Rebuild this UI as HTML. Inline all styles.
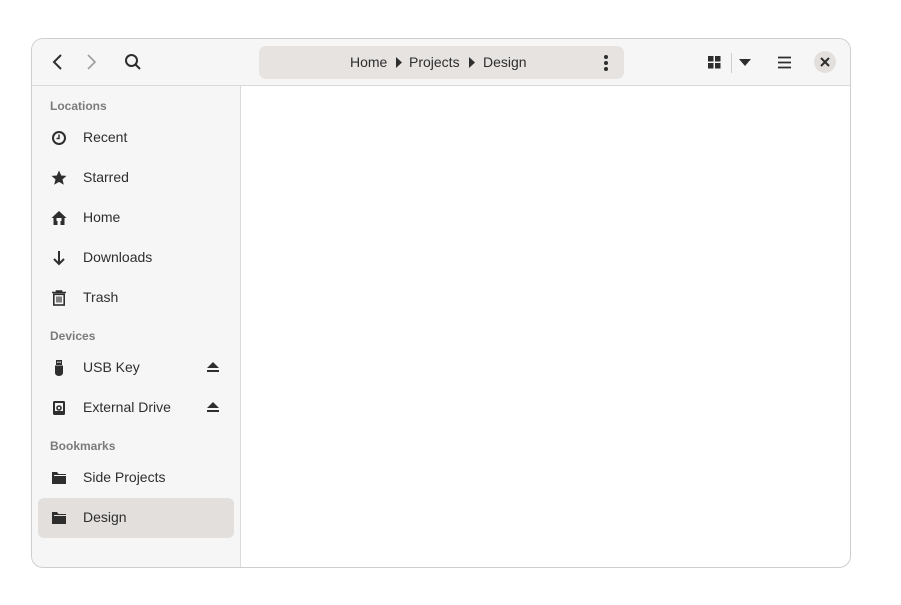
<!DOCTYPE html>
<html><head><style>
body{margin:0;width:901px;height:605px;background:#fff;font-family:"Liberation Sans","DejaVu Sans",sans-serif;position:relative;overflow:hidden}
.win{position:absolute;left:31px;top:38px;width:818px;height:528px;border:1px solid #d0cdca;border-radius:12px;overflow:hidden;background:#fff}
.hdr{position:absolute;left:0;top:0;width:818px;height:46px;background:#f6f6f6;border-bottom:1px solid #dcd9d6}
.side{position:absolute;left:0;top:47px;width:208px;height:481px;background:#f6f6f6;border-right:1px solid #dcd9d6}
.sec{position:absolute;left:18px;font-size:12px;color:#7b7b7b;font-weight:bold}
.it{position:absolute;left:6px;width:196px;height:40px;border-radius:6px;font-size:14px;color:#2e2e2e}
.it span{position:absolute;left:45px;top:11px}
.it svg{position:absolute;left:13px;top:12px}
.path{position:absolute;left:227px;top:7px;width:365px;height:33px;background:#e6e3e1;border-radius:7px;font-size:14px;color:#2e2e2e}
</style></head><body>
<div class="win">
<div class="hdr">
<svg style="position:absolute;left:18px;top:14px" width="16" height="18"><path d="M11 2L4 9l7 7" fill="none" stroke="#2e2e2e" stroke-width="2"/></svg>
<svg style="position:absolute;left:51px;top:14px" width="16" height="18"><path d="M5 2l7 7-7 7" fill="none" stroke="#a0a0a0" stroke-width="1.7"/></svg>
<svg style="position:absolute;left:92px;top:14px" width="18" height="18"><circle cx="7.5" cy="7.5" r="5.5" fill="none" stroke="#2e2e2e" stroke-width="2"/><path d="M11.5 11.5l4.5 4.5" stroke="#2e2e2e" stroke-width="2"/></svg>
<div class="path">
<span style="position:absolute;left:91px;top:8px">Home</span>
<svg style="position:absolute;left:137px;top:11px" width="6" height="11"><path d="M0 0l6 5.5L0 11z" fill="#2e2e2e"/></svg>
<span style="position:absolute;left:150px;top:8px">Projects</span>
<svg style="position:absolute;left:210px;top:11px" width="6" height="11"><path d="M0 0l6 5.5L0 11z" fill="#2e2e2e"/></svg>
<span style="position:absolute;left:224px;top:8px">Design</span>
<svg style="position:absolute;left:344px;top:8px" width="6" height="18"><circle cx="3" cy="3" r="2" fill="#2e2e2e"/><circle cx="3" cy="9" r="2" fill="#2e2e2e"/><circle cx="3" cy="15" r="2" fill="#2e2e2e"/></svg>
</div>
<svg style="position:absolute;left:676px;top:17px" width="13" height="13"><rect x="0" y="0" width="5.5" height="5.5" fill="#2e2e2e"/><rect x="7" y="0" width="5.5" height="5.5" fill="#2e2e2e"/><rect x="0" y="7" width="5.5" height="5.5" fill="#2e2e2e"/><rect x="7" y="7" width="5.5" height="5.5" fill="#2e2e2e"/></svg>
<div style="position:absolute;left:699px;top:14px;width:1px;height:20px;background:#d0cdca"></div>
<svg style="position:absolute;left:707px;top:20px" width="12" height="7"><path d="M0 0h12L6 7z" fill="#2e2e2e"/></svg>
<svg style="position:absolute;left:746px;top:17px" width="13" height="13"><path d="M0 1.5h13M0 6.5h13M0 11.5h13" stroke="#2e2e2e" stroke-width="1.8"/></svg>
<div style="position:absolute;left:782px;top:12px;width:22px;height:22px;border-radius:50%;background:#e2dfdd"></div>
<svg style="position:absolute;left:788px;top:18px" width="10" height="10"><path d="M1 1l8 8M9 1L1 9" stroke="#2e2e2e" stroke-width="2"/></svg>
</div>
<div class="side">
<div class="sec" style="top:13px">Locations</div>
<div class="it" style="top:32px"><svg width="16" height="16"><circle cx="8" cy="8" r="6" fill="none" stroke="#2e2e2e" stroke-width="2"/><path d="M8 4.5V8.5H5.5" fill="none" stroke="#2e2e2e" stroke-width="1.5"/></svg><span>Recent</span></div>
<div class="it" style="top:72px"><svg width="16" height="16"><path d="M8 0.5l2.2 5 5.3.4-4 3.5 1.3 5.3L8 11.9 3.2 14.7 4.5 9.4.5 5.9l5.3-.4z" fill="#2e2e2e"/></svg><span>Starred</span></div>
<div class="it" style="top:112px"><svg width="16" height="16"><path d="M8 1L0.5 8h2v7h4v-4h3v4h4V8h2z" fill="#2e2e2e"/><rect x="5.5" y="8" width="5" height="3" fill="#f6f6f6"/></svg><span>Home</span></div>
<div class="it" style="top:152px"><svg width="16" height="16"><path d="M8 1v13M3 9l5 5 5-5" fill="none" stroke="#2e2e2e" stroke-width="2"/></svg><span>Downloads</span></div>
<div class="it" style="top:192px"><svg width="16" height="16"><path d="M1 2.5h14M5.5 2.5V1h5v1.5" stroke="#2e2e2e" stroke-width="1.6" fill="none"/><rect x="2.8" y="4.3" width="10.4" height="10.7" fill="none" stroke="#2e2e2e" stroke-width="1.6"/><path d="M6 6.5v6M8 6.5v6M10 6.5v6" stroke="#2e2e2e" stroke-width="1.2"/></svg><span>Trash</span></div>
<div class="sec" style="top:243px">Devices</div>
<div class="it" style="top:262px"><svg width="16" height="16"><rect x="5" y="0" width="6" height="5" fill="#2e2e2e"/><rect x="6.3" y="1.5" width="1.2" height="1.5" fill="#f6f6f6"/><rect x="8.5" y="1.5" width="1.2" height="1.5" fill="#f6f6f6"/><path d="M4 5.5h8V13a4 3 0 0 1-8 0z" fill="#2e2e2e"/></svg><span>USB Key</span><svg width="12" height="11" style="left:169px;top:14px"><path d="M6 0L12 6H0z M0 8h12v2H0z" fill="#2e2e2e"/></svg></div>
<div class="it" style="top:302px"><svg width="16" height="16"><rect x="2" y="1" width="12" height="14" rx="1.5" fill="#2e2e2e"/><rect x="4" y="3" width="8" height="10" fill="#f6f6f6"/><circle cx="8" cy="8" r="2.8" fill="#2e2e2e"/><circle cx="8" cy="8" r="1.2" fill="#f6f6f6"/><rect x="4" y="11" width="8" height="2" fill="#2e2e2e"/></svg><span>External Drive</span><svg width="12" height="11" style="left:169px;top:14px"><path d="M6 0L12 6H0z M0 8h12v2H0z" fill="#2e2e2e"/></svg></div>
<div class="sec" style="top:353px">Bookmarks</div>
<div class="it" style="top:372px"><svg width="16" height="16"><path d="M1 2h5l1.5 2H15v10H1z" fill="#2e2e2e"/><path d="M3 5.5h12" stroke="#f6f6f6" stroke-width="1"/></svg><span>Side Projects</span></div>
<div class="it" style="top:412px;background:#e2dfdd"><svg width="16" height="16"><path d="M1 2h5l1.5 2H15v10H1z" fill="#2e2e2e"/><path d="M3 5.5h12" stroke="#e2dfdd" stroke-width="1"/></svg><span>Design</span></div>
</div>
</div>
</body></html>
